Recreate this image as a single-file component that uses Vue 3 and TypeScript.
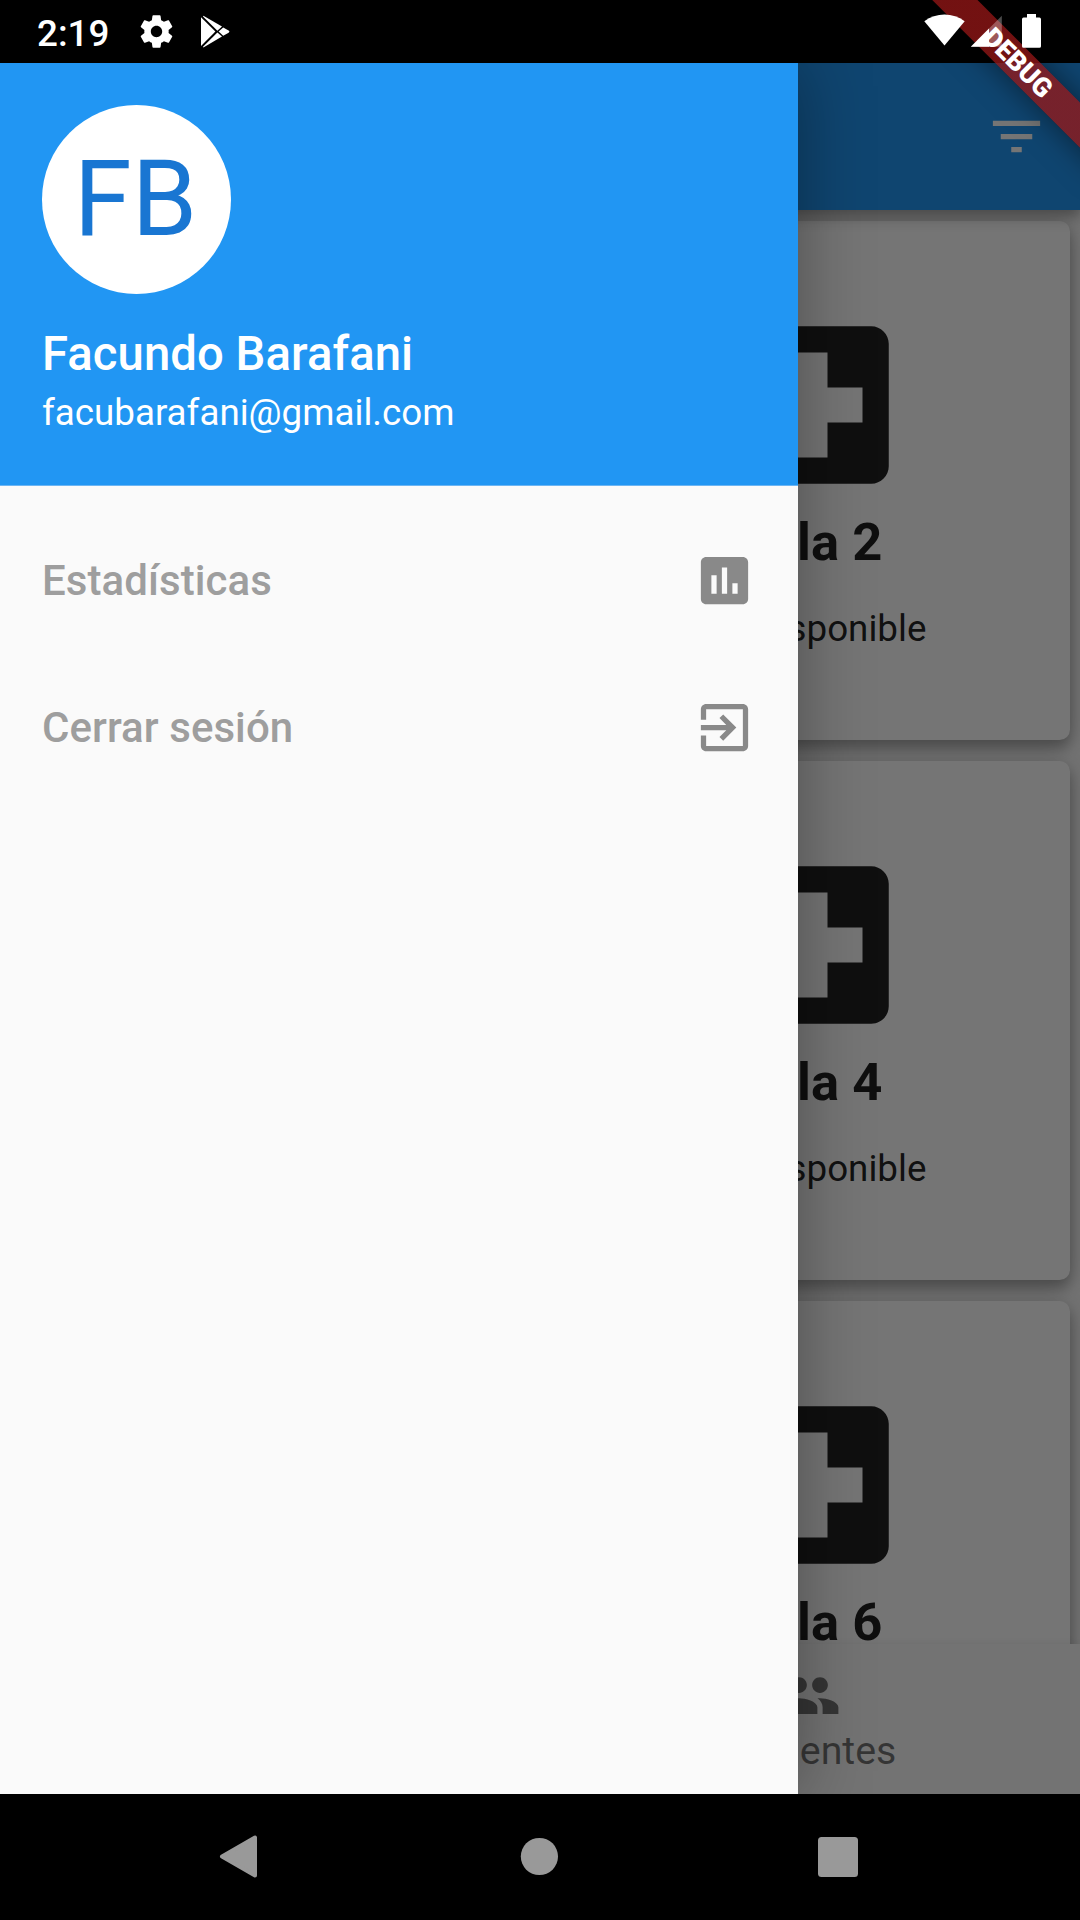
<script setup lang="ts">
interface Room {
  name: string
  status: string
}

interface DrawerItem {
  label: string
  path: string
}

const rooms: Room[] = [
  { name: 'Sala 2', status: 'No disponible' },
  { name: 'Sala 4', status: 'No disponible' },
  { name: 'Sala 6', status: '' },
]

const items: DrawerItem[] = [
  {
    label: 'Estadísticas',
    path: 'M19 3H5c-1.1 0-2 .9-2 2v14c0 1.1.9 2 2 2h14c1.1 0 2-.9 2-2V5c0-1.1-.9-2-2-2zM9 17H7v-7h2v7zm4 0h-2V7h2v10zm4 0h-2v-4h2v4z',
  },
  {
    label: 'Cerrar sesión',
    path: 'M10.09 15.59L11.5 17l5-5-5-5-1.41 1.41L12.67 11H3v2h9.67l-2.58 2.59zM19 3H5c-1.11 0-2 .9-2 2v4h2V5h14v14H5v-4H3v4c0 1.1.89 2 2 2h14c1.1 0 2-.9 2-2V5c0-1.1-.9-2-2-2z',
  },
]
</script>

<template>
  <div class="device">
    <header class="status-bar">
      <span class="clock">2:19</span>
      <svg class="gear" viewBox="0 0 24 24">
        <path
          d="M19.43 12.98c.04-.32.07-.64.07-.98s-.03-.66-.07-.98l2.11-1.65c.19-.15.24-.42.12-.64l-2-3.46c-.12-.22-.39-.3-.61-.22l-2.49 1c-.52-.4-1.08-.73-1.69-.98l-.38-2.65C14.46 2.18 14.25 2 14 2h-4c-.25 0-.46.18-.49.42l-.38 2.65c-.61.25-1.17.59-1.69.98l-2.49-1c-.23-.09-.49 0-.61.22l-2 3.46c-.13.22-.07.49.12.64l2.11 1.65c-.04.32-.07.65-.07.98s.03.66.07.98l-2.11 1.65c-.19.15-.24.42-.12.64l2 3.46c.12.22.39.3.61.22l2.49-1c.52.4 1.08.73 1.69.98l.38 2.65c.03.24.24.42.49.42h4c.25 0 .46-.18.49-.42l.38-2.65c.61-.25 1.17-.59 1.69-.98l2.49 1c.23.09.49 0 .61-.22l2-3.46c.12-.22.07-.49-.12-.64l-2.11-1.65zM12 15.5c-1.93 0-3.5-1.57-3.5-3.5s1.57-3.5 3.5-3.5 3.5 1.57 3.5 3.5-1.57 3.5-3.5 3.5z"
        />
      </svg>
      <svg class="play" viewBox="0 0 30 34">
        <path d="M1 2.2V31L15.4 16.6z" />
        <path d="M3.4 .8L22 11.6L17.4 15.8L3 1.4z" />
        <path d="M3.4 32.4L22 21.6L17.4 17.4L3 31.8z" />
        <path d="M23.2 12.4L28.6 15.4Q30.2 16.6 28.6 17.8L23.2 20.8L18.6 16.6z" />
      </svg>
      <span class="spacer"></span>
      <svg class="radios" viewBox="0 0 120 36">
        <path d="M.3 7.2C12 -1.6 29 -1.6 40.7 7.2L20.5 31.6z" />
        <path d="M46.8 32.8L77.8 1.8V32.8z" opacity=".3" />
        <path d="M46.8 32.8L65 14.6V32.8z" />
        <path d="M103 0h9v3.6h3.4q1.6 0 1.6 1.6V32.2q0 1.6-1.6 1.6H99.6q-1.6 0-1.6-1.6V5.2q0-1.6 1.6-1.6H103z" />
      </svg>
    </header>

    <div class="app">
      <div class="app-bar">
        <svg class="icon" viewBox="0 0 24 24">
          <path d="M10 18h4v-2h-4v2zM3 6v2h18V6H3zm3 7h12v-2H6v2z" />
        </svg>
      </div>

      <main class="rooms">
        <article v-for="room in rooms" :key="room.name" class="card">
          <svg class="room-icon" viewBox="0 0 24 24">
            <path
              d="M19 3H5c-1.1 0-1.99.9-1.99 2L3 19c0 1.1.9 2 2 2h14c1.1 0 2-.9 2-2V5c0-1.1-.9-2-2-2zm-1 11h-4v4h-4v-4H6v-4h4V6h4v4h4v4z"
            />
          </svg>
          <h2>{{ room.name }}</h2>
          <p v-if="room.status">{{ room.status }}</p>
        </article>
      </main>

      <nav class="tabs">
        <div class="tab">
          <svg class="icon" viewBox="0 0 24 24">
            <path
              d="M16 11c1.66 0 2.99-1.34 2.99-3S17.66 5 16 5c-1.66 0-3 1.34-3 3s1.34 3 3 3zm-8 0c1.66 0 2.99-1.34 2.99-3S9.66 5 8 5C6.34 5 5 6.34 5 8s1.34 3 3 3zm0 2c-2.33 0-7 1.17-7 3.5V19h14v-2.5c0-2.33-4.67-3.5-7-3.5zm8 0c-.29 0-.62.02-.97.05 1.16.84 1.97 1.97 1.97 3.45V19h6v-2.5c0-2.33-4.67-3.5-7-3.5z"
            />
          </svg>
          <span>Pacientes</span>
        </div>
      </nav>

      <div class="scrim"></div>

      <aside class="drawer">
        <section class="account">
          <div class="avatar">FB</div>
          <strong>Facundo Barafani</strong>
          <span class="email">facubarafani@gmail.com</span>
        </section>
        <ul>
          <li v-for="item in items" :key="item.label">
            <span>{{ item.label }}</span>
            <svg class="icon" viewBox="0 0 24 24"><path :d="item.path" /></svg>
          </li>
        </ul>
      </aside>
    </div>

    <footer class="system-nav">
      <svg viewBox="0 0 1080 126">
        <path d="M222 62.5L255 43.5V81.5z" stroke="#999" stroke-width="4" stroke-linejoin="round" />
        <circle cx="539.4" cy="62.5" r="18.6" />
        <rect x="818" y="43" width="40" height="40" rx="3.5" />
      </svg>
    </footer>

    <div class="banner-clip">
      <div class="banner">DEBUG</div>
    </div>
  </div>
</template>

<style>
body {
  margin: 0;
  background: #000;
}
</style>

<style scoped>
.device {
  position: relative;
  display: flex;
  flex-direction: column;
  width: 1080px;
  height: 1920px;
  overflow: hidden;
  background: #000;
  font-family: Roboto, 'Noto Sans', sans-serif;
}

.status-bar {
  position: relative;
  z-index: 2;
  display: flex;
  align-items: center;
  height: 63px;
  box-sizing: border-box;
  padding: 0 37px 0 37px;
  color: #fff;
  fill: #fff;
}

.clock {
  width: 100px;
  font-size: 36.75px;
  font-weight: 500;
  line-height: 43px;
  padding-top: 3px;
}

.gear {
  width: 39px;
  height: 39px;
}

.play {
  width: 30px;
  height: 34px;
  margin-left: 24px;
}

.spacer {
  flex: 1;
}

.radios {
  width: 120px;
  height: 36px;
  margin-top: 1px;
  margin-right: -1px;
}

.app {
  position: relative;
  z-index: 0;
  display: flex;
  flex-direction: column;
  height: 1731px;
  overflow: hidden;
  background: #fafafa;
}

.icon {
  display: block;
  width: 63px;
  height: 63px;
}

.app-bar {
  position: relative;
  z-index: 1;
  display: flex;
  flex: none;
  align-items: center;
  justify-content: flex-end;
  height: 147px;
  box-sizing: border-box;
  padding-right: 31.6px;
  background: #2196f3;
  fill: #fff;
  box-shadow: 0 5px 10px rgba(0, 0, 0, 0.2), 0 10px 13px rgba(0, 0, 0, 0.1), 0 3px 26px rgba(0, 0, 0, 0.1);
}

.rooms {
  display: flex;
  flex: 1;
  flex-direction: column;
  align-items: flex-end;
  gap: 21px;
  min-height: 0;
  overflow: hidden;
  padding: 10.5px 10.5px 0;
}

.card {
  display: flex;
  flex: none;
  flex-direction: column;
  align-items: center;
  width: 519px;
  height: 519px;
  box-sizing: border-box;
  padding-top: 79.5px;
  border-radius: 10.5px;
  background: #fff;
  color: rgba(0, 0, 0, 0.87);
  box-shadow: 0 8px 13px rgba(0, 0, 0, 0.26), 0 3px 26px rgba(0, 0, 0, 0.18);
}

.room-icon {
  width: 210px;
  height: 210px;
  fill: rgba(0, 0, 0, 0.87);
}

.card h2 {
  margin: 9.5px 0 0;
  padding-right: 1px;
  font-size: 52.5px;
  font-weight: 700;
  line-height: 44px;
}

.card p {
  margin: 43.5px 0 0;
  padding-left: 8px;
  font-size: 36.75px;
  line-height: 43px;
}

.tabs {
  position: relative;
  display: flex;
  flex: none;
  justify-content: flex-end;
  height: 150px;
  background: #fafafa;
  box-shadow: 0 -2px 8px rgba(0, 0, 0, 0.05);
}

.tab {
  display: flex;
  flex-direction: column;
  align-items: center;
  width: 541px;
  box-sizing: border-box;
  padding-top: 20px;
  color: rgba(0, 0, 0, 0.54);
  fill: rgba(0, 0, 0, 0.54);
  font-size: 39.375px;
  line-height: 48px;
}

.tab span {
  padding-left: 1px;
}

.scrim {
  position: absolute;
  inset: 0;
  z-index: 2;
  background: rgba(0, 0, 0, 0.54);
}

.drawer {
  position: absolute;
  inset: 0 auto 0 0;
  z-index: 3;
  width: 798px;
  background: #fafafa;
  box-shadow: 0 0 66px rgba(0, 0, 0, 0.34);
}

.account {
  display: flex;
  flex-direction: column;
  height: 423px;
  box-sizing: border-box;
  padding: 42px;
  border-bottom: 1px solid #6cb5f3;
  background: #2196f3;
  color: #fff;
}

.avatar {
  width: 189px;
  height: 189px;
  box-sizing: border-box;
  padding-right: 2px;
  border-radius: 50%;
  background: #fff;
  color: #1976d2;
  font-size: 105px;
  line-height: 189px;
  text-align: center;
}

.account strong {
  margin-top: 33px;
  font-size: 47.25px;
  font-weight: 500;
  line-height: 55px;
  letter-spacing: 0.06px;
}

.email {
  margin-top: 9px;
  font-size: 36.75px;
  line-height: 43px;
}

.drawer ul {
  margin: 0;
  padding: 21px 42px 0;
  list-style: none;
}

.drawer li {
  display: flex;
  align-items: center;
  justify-content: space-between;
  height: 147px;
  color: #9e9e9e;
  fill: #898989;
  font-size: 42px;
  font-weight: 500;
  letter-spacing: 0.06px;
}

.system-nav {
  height: 126px;
  background: #000;
  fill: #999;
}

.system-nav svg {
  display: block;
  width: 1080px;
  height: 126px;
}

.banner-clip {
  position: absolute;
  top: 0;
  right: 0;
  z-index: 1;
  width: 240px;
  height: 240px;
  overflow: hidden;
}

.banner {
  position: absolute;
  top: 47px;
  right: -77.5px;
  width: 280px;
  height: 31.5px;
  background: linear-gradient(rgba(183, 28, 28, 0.627), rgba(183, 28, 28, 0.627)), rgba(0, 0, 0, 0.37);
  box-shadow: 0 0 31px rgba(0, 0, 0, 0.5);
  color: #fff;
  font-size: 26.8px;
  font-weight: 900;
  line-height: 32px;
  text-align: center;
  transform: rotate(45deg);
}
</style>
